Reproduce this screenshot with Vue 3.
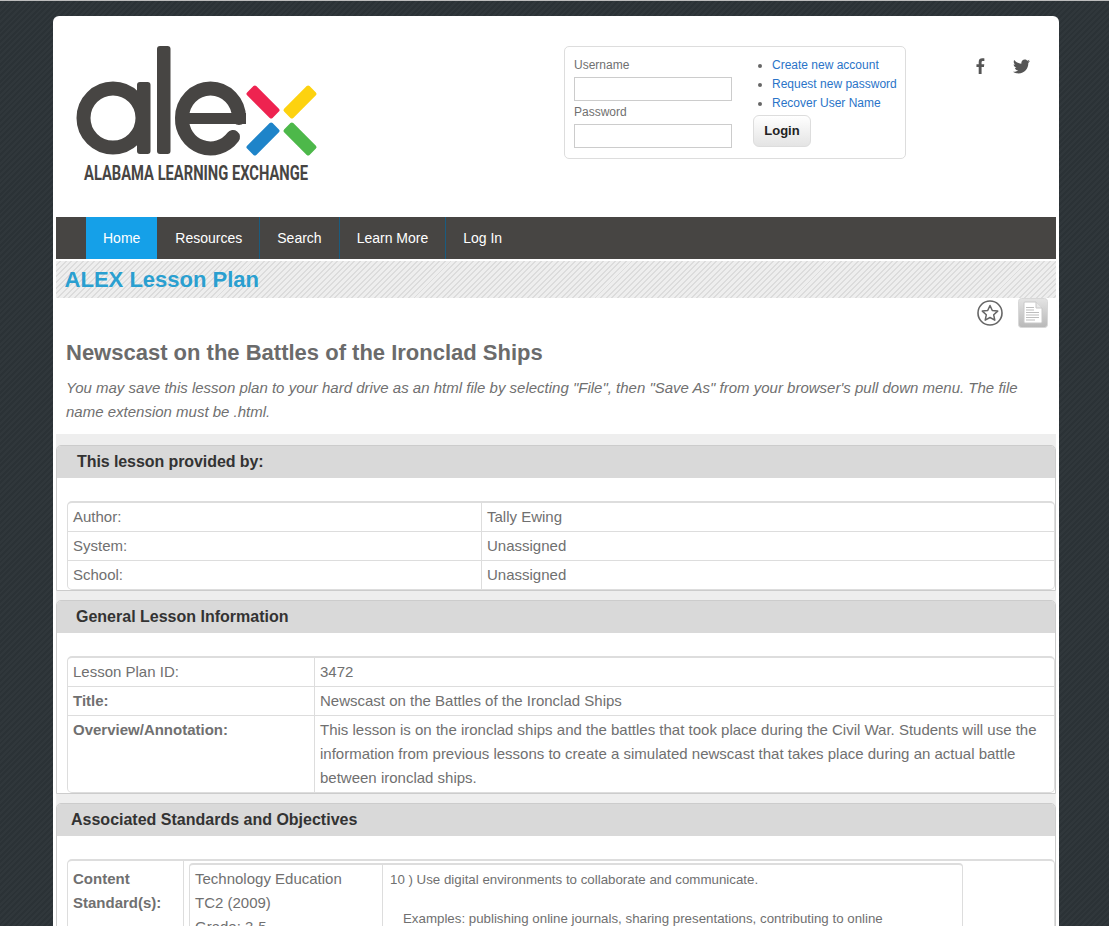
<script setup>
const navItems = ['Home', 'Resources', 'Search', 'Learn More', 'Log In']
const links = ['Create new account', 'Request new password', 'Recover User Name']
</script>

<template>
  <div class="page">
    <div class="card">
      <header class="top">
        <svg class="logo" width="250" height="140" viewBox="72 44 250 140">
          <g fill="none" stroke="#474543">
            <circle cx="113" cy="118" r="29.500" stroke-width="14" />
            <path d="M182 118a28.500 29.500 0 0 1 57 0M182 118a28.500 29.500 0 0 0 51 19" stroke-width="14" stroke-linecap="round" />
          </g>
          <g fill="#474543">
            <rect x="137" y="82" width="13.500" height="72" rx="3" />
            <rect x="157" y="46" width="13.500" height="108" rx="3" />
            <rect x="189" y="113" width="57" height="11" />
          </g>
          <rect x="245" y="95.500" width="36" height="13" rx="2" transform="rotate(45 263 102)" fill="#ee2350" />
          <rect x="282" y="95.500" width="36" height="13" rx="2" transform="rotate(-45 300 102)" fill="#fdd20f" />
          <rect x="245" y="132.500" width="36" height="13" rx="2" transform="rotate(-45 263 139)" fill="#1e84c9" />
          <rect x="282" y="132.500" width="36" height="13" rx="2" transform="rotate(45 300 139)" fill="#4db84a" />
          <text x="84" y="180" class="tag" textLength="224" lengthAdjust="spacingAndGlyphs">ALABAMA LEARNING EXCHANGE</text>
        </svg>
        <div class="login">
          <div class="fields">
            <label>Username</label>
            <input type="text" />
            <label class="second">Password</label>
            <input type="password" />
          </div>
          <div class="side">
            <ul>
              <li v-for="l in links" :key="l"><a>{{ l }}</a></li>
            </ul>
            <button>Login</button>
          </div>
        </div>
        <div class="social">
          <svg width="9" height="18" viewBox="0 0 10 18"><path fill="#555" d="M3 18V10H.5V7H3V4.500C3 1.700 4.500.5 7 .5c1 0 2 .1 2.300.2v2.700H7.800C6.500 3.400 6.200 4 6.200 5v2h3l-.4 3H6.200v8z" /></svg>
          <svg width="17" height="15" viewBox="0 0 18 15"><path fill="#555" d="M18 1.800c-.7.3-1.400.5-2.100.6.800-.5 1.300-1.200 1.600-2-.7.400-1.500.7-2.300.9C14.500.5 13.500 0 12.500 0 10.400 0 8.800 1.700 8.800 3.700c0 .3 0 .6.100.8C5.800 4.400 3.100 2.900 1.300.7.900 1.300.8 1.900.8 2.600c0 1.300.6 2.400 1.600 3.100-.6 0-1.200-.2-1.700-.5 0 1.800 1.300 3.300 3 3.700-.6.200-1.100.2-1.700.1.500 1.500 1.800 2.500 3.500 2.600C4 12.600 2.100 13.300 0 13.100 1.700 14.200 3.700 14.800 5.700 14.800c6.800 0 10.500-5.600 10.500-10.500v-.5c.7-.5 1.300-1.200 1.800-2z" /></svg>
        </div>
      </header>

      <nav class="nav">
        <a v-for="(n, i) in navItems" :key="n" :class="{ active: i === 0 }">{{ n }}</a>
      </nav>

      <div class="strip">ALEX Lesson Plan</div>

      <div class="tools">
        <svg width="26" height="26" viewBox="0 0 26 26">
          <circle cx="13" cy="13" r="12" fill="none" stroke="#666" stroke-width="1.600" />
          <path d="M13 5.500l2.300 5 5.400.6-4 3.700 1.100 5.400L13 17.500l-4.800 2.700 1.100-5.400-4-3.700 5.400-.6z" fill="none" stroke="#666" stroke-width="1.500" stroke-linejoin="round" />
        </svg>
        <svg width="30" height="30" viewBox="0 0 30 30">
          <defs>
            <linearGradient id="tile" x1="0" y1="0" x2="0" y2="1">
              <stop offset="0" stop-color="#e4e4e4" />
              <stop offset="1" stop-color="#b8b8b8" />
            </linearGradient>
          </defs>
          <rect x=".5" y=".5" width="29" height="29" rx="3" fill="url(#tile)" stroke="#d8d8d8" />
          <path d="M7 4h11l6 6v14a1 1 0 0 1-1 1H7a1 1 0 0 1-1-1V5a1 1 0 0 1 1-1z" fill="#fff" stroke="#c8c8c8" />
          <path d="M18 4v6h6" fill="#e8e8e8" stroke="#c8c8c8" />
          <path d="M8 9.500h8M8 12h8M8 14.500h13M8 17h13M8 19.500h13M8 22h9" stroke="#bdbdbd" fill="none" />
        </svg>
      </div>

      <section class="intro">
        <h1>Newscast on the Battles of the Ironclad Ships</h1>
        <p>You may save this lesson plan to your hard drive as an html file by selecting "File", then "Save As" from your browser's pull down menu. The file name extension must be .html.</p>
      </section>

      <div class="band">
        <section class="panel">
          <h2 class="h-a">This lesson provided by:</h2>
          <table class="tbl t1">
            <tbody>
              <tr><td class="c1">Author:</td><td>Tally Ewing</td></tr>
              <tr><td class="c1">System:</td><td>Unassigned</td></tr>
              <tr><td class="c1">School:</td><td>Unassigned</td></tr>
            </tbody>
          </table>
        </section>

        <section class="panel">
          <h2 class="h-b">General Lesson Information</h2>
          <table class="tbl t2">
            <tbody>
              <tr><td class="c1">Lesson Plan ID:</td><td>3472</td></tr>
              <tr><td class="c1"><b>Title:</b></td><td>Newscast on the Battles of the Ironclad Ships</td></tr>
              <tr><td class="c1"><b>Overview/Annotation:</b></td><td>This lesson is on the ironclad ships and the battles that took place during the Civil War. Students will use the information from previous lessons to create a simulated newscast that takes place during an actual battle between ironclad ships.</td></tr>
            </tbody>
          </table>
        </section>

        <section class="panel">
          <h2 class="h-c">Associated Standards and Objectives</h2>
          <table class="tbl t3">
            <tbody>
              <tr>
                <td class="c1 label-top"><b>Content Standard(s):</b></td>
                <td class="holder">
                  <table class="inner">
                    <tbody>
                      <tr>
                        <td class="subject">Technology Education<br />TC2 (2009)<br />Grade: 3-5</td>
                        <td class="std">
                          <div>10 ) Use digital environments to collaborate and communicate.</div>
                          <div class="ex">Examples: publishing online journals, sharing presentations, contributing to online discussions</div>
                        </td>
                      </tr>
                    </tbody>
                  </table>
                </td>
              </tr>
            </tbody>
          </table>
        </section>
      </div>
    </div>
  </div>
</template>

<style>
html, body { margin: 0; height: 926px; overflow: hidden; }
body { background: #2c3337; }
</style>

<style scoped>
.page {
  overflow: hidden;
  border-top: 1px solid #bdbdbd;
  padding-left: 53px;
  padding-top: 15px;
  box-sizing: border-box;
  height: 926px;
  background: repeating-linear-gradient(135deg, #2b3236 0, #2b3236 2px, #30373b 2px, #30373b 4px);
  font-family: "Liberation Sans", Arial, sans-serif;
  color: #707070;
}
.card {
  width: 1006px;
  background: #fff;
  border-radius: 6px 6px 0 0;
  padding: 0 3px;
  box-sizing: border-box;
}
.top {
  height: 201px;
  display: flex;
  align-items: flex-start;
}
.logo { margin: 28px 0 0 16px; flex: none; }
.tag {
  font-family: Roboto, "Liberation Sans", sans-serif;
  font-size: 21px;
  font-weight: 700;
  fill: #474543;
}
.login {
  margin: 30px 0 0 242px;
  width: 342px;
  height: 113px;
  box-sizing: border-box;
  border: 1px solid #ddd;
  border-radius: 5px;
  padding: 10px 9px 0 9px;
  display: flex;
  font-size: 12px;
  flex: none;
}
.fields { width: 158px; flex: none; display: flex; flex-direction: column; }
.fields label { line-height: 16px; height: 20px; }
.fields .second { margin-top: 3px; height: 20px; }
.fields input {
  width: 158px;
  height: 24px;
  box-sizing: border-box;
  border: 1px solid #ccc;
  padding: 0;
  background: #fff;
}
.side { margin-left: 21px; flex: none; }
.side ul { margin: -1px 0 0; padding: 0 0 0 19px; }
.side li { line-height: 19px; color: #666; white-space: nowrap; }
.side a { color: #2a74c8; }
.side button {
  display: block;
  margin-top: 2px;
  width: 58px;
  height: 32px;
  border: 1px solid #ddd;
  border-radius: 6px;
  background: linear-gradient(#fff, #e4e4e4);
  font: 700 13px "Liberation Sans", Arial, sans-serif;
  color: #222;
  padding: 0 0 2px;
}
.social {
  margin: 41px 0 0 70px;
  display: flex;
  gap: 28px;
  align-items: center;
  height: 18px;
}
.nav {
  height: 42px;
  background: #474543;
  display: flex;
  padding-left: 30px;
}
.nav a {
  padding: 0 17px;
  line-height: 42px;
  font-size: 14px;
  color: #fff;
  border-right: 1px solid #1a5c80;
}
.nav a:last-child { border-right: 0; }
.nav a.active { background: #15a0e8; border-right: 0; }
.nav a.active + a { padding-left: 18px; }
.strip {
  margin-top: 2px;
  height: 37px;
  line-height: 37px;
  padding-left: 8.600px;
  font-size: 22px;
  font-weight: 700;
  color: #2a9fd0;
  background: repeating-linear-gradient(135deg, #eeeeee 0, #eeeeee 2.600px, #dcdcdc 2.600px, #dcdcdc 4px);
}
.tools {
  height: 32px;
  display: flex;
  justify-content: flex-end;
  align-items: flex-start;
  gap: 15px;
  padding-right: 8px;
}
.tools svg:first-child { margin-top: 2px; }
.intro { padding: 9px 10px 10px; }
.intro h1 { margin: 0 0 9px; font-size: 22px; line-height: 28px; font-weight: 700; color: #6b6b6b; }
.intro p { margin: 0; font-size: 15px; line-height: 24px; font-style: italic; color: #707070; }
.band {
  background: #eee;
  padding: 11px 0 0;
}
.panel {
  border: 1px solid #ccc;
  border-radius: 5px 5px 0 0;
  background: #fff;
  margin-bottom: 9px;
  padding: 0 0 0 10px;
}
.panel h2 {
  margin: 0 0 23px -10px;
  height: 32px;
  line-height: 31px;
  background: #d9d9d9;
  font-size: 16px;
  font-weight: 700;
  color: #333;
  border-radius: 4px 4px 0 0;
}
.h-a { padding-left: 20px; letter-spacing: -0.08px; }
.h-b { padding-left: 19px; }
.h-c { padding-left: 14px; }
.tbl {
  width: 100%;
  box-sizing: border-box;
  border-collapse: separate;
  border-spacing: 0;
  border: 1px solid #ddd;
  border-top-width: 2px;
  border-radius: 5px;
  font-size: 15px;
  table-layout: fixed;
  color: #707070;
}
.tbl > tbody > tr > td {
  padding: 2px 5px;
  line-height: 24px;
  vertical-align: top;
  border-top: 1px solid #ddd;
}
.tbl > tbody > tr:first-child > td { border-top: 0; }
.tbl > tbody > tr > td.c1 { border-right: 1px solid #ddd; }
.t1 .c1 { width: 403px; }
.t2 .c1 { width: 236px; }
.t3 .c1 { width: 105px; }
.tbl > tbody > tr > td.label-top { padding-top: 6px; }
.tbl > tbody > tr > td.holder { padding: 2px 5px; }
.inner {
  width: 774px;
  border-collapse: separate;
  border-spacing: 0;
  border: 1px solid #ddd;
  border-top-width: 2px;
  border-radius: 4px;
  table-layout: fixed;
  color: #707070;
}
.subject {
  width: 182px;
  padding: 2px 5px;
  line-height: 24px;
  vertical-align: top;
  border-right: 1px solid #ddd;
  font-size: 15px;
}
.std { padding: 5px 7px; font-size: 13.300px; line-height: 20px; vertical-align: top; }
.ex { margin: 19px 0 0 13px; max-width: 500px; }
</style>
